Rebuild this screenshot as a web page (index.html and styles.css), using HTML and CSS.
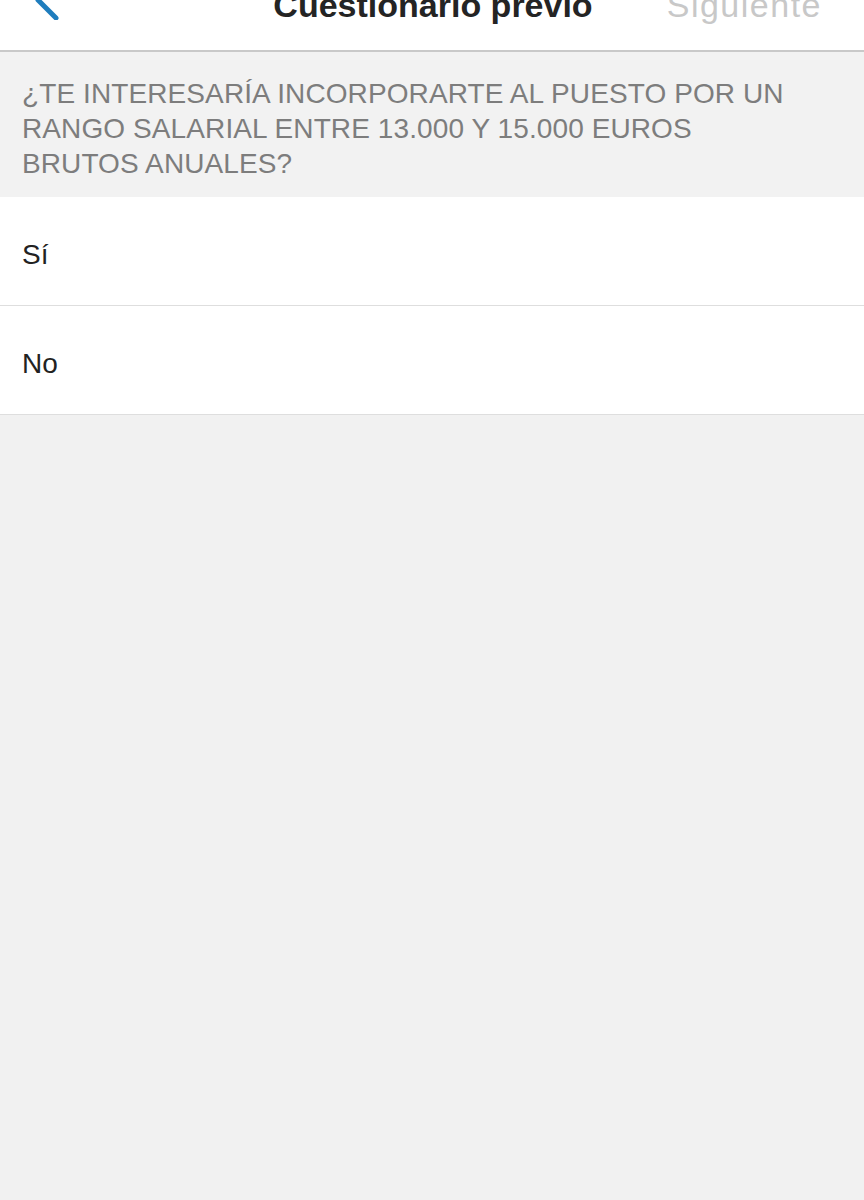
FILE: index.html
```html
<!DOCTYPE html>
<html lang="es">
<head>
  <meta charset="UTF-8" />
  <meta name="viewport" content="width=device-width, initial-scale=1.0" />
  <title>Cuestionario previo</title>
  <link rel="stylesheet" href="styles.css">
</head>
<body>
  <header class="nav-bar">
    <div class="nav-inner">
      <div class="nav-left">
        <svg class="back-icon" width="30" height="46" viewBox="0 0 30 46">
          <polyline points="24,4 6,26 24,44" fill="none" stroke="#1f7dbd" stroke-width="5" stroke-linecap="round" stroke-linejoin="round" />
        </svg>
      </div>
      <h1 class="nav-title">Cuestionario previo</h1>
      <div class="nav-right">
        <span class="nav-next">Siguiente</span>
      </div>
    </div>
  </header>

  <section class="question">
    <p class="question-text">¿Te interesaría incorporarte al puesto por un rango salarial entre 13.000 y 15.000 euros brutos anuales?</p>
  </section>

  <ul class="options">
    <li class="option">Sí</li>
    <li class="option">No</li>
  </ul>
</body>
</html>
```

FILE: styles.css
```css
body {
  font-family: "Liberation Sans", Arial, sans-serif;
  background: #f1f1f1;
  margin: 0;
  padding: 0;
}

.nav-bar {
  height: 50px;
  background: #ffffff;
  border-bottom: 2px solid #c9c9c9;
  overflow: hidden;
}

.nav-inner {
  display: flex;
  align-items: flex-start;
  padding: 0 30px 0 32px;
}

.nav-left {
  flex: 1;
}

.back-icon {
  display: block;
  margin-top: -26px;
}

.nav-title {
  margin: -12px 0 0;
  font-size: 34px;
  line-height: 34px;
  font-weight: bold;
  color: #242424;
}

.nav-right {
  flex: 1;
  margin-top: -12px;
  text-align: right;
}

.nav-next {
  font-size: 34px;
  line-height: 34px;
  color: #c8c8c8;
  letter-spacing: 1.5px;
  margin-right: 12px;
}

.question {
  background: #f2f2f2;
  padding: 24px 22px 16px;
}

.question-text {
  margin: 0;
  font-size: 28px;
  line-height: 35px;
  color: #7d7d7d;
  text-transform: uppercase;
  letter-spacing: 0.1px;
  max-width: 790px;
}

.options {
  list-style: none;
  margin: 0;
  padding: 0;
  background: #ffffff;
}

.option {
  height: 101px;
  padding: 7px 22px 0;
  display: flex;
  align-items: center;
  font-size: 28px;
  color: #222222;
  border-bottom: 1px solid #dedede;
}
```
